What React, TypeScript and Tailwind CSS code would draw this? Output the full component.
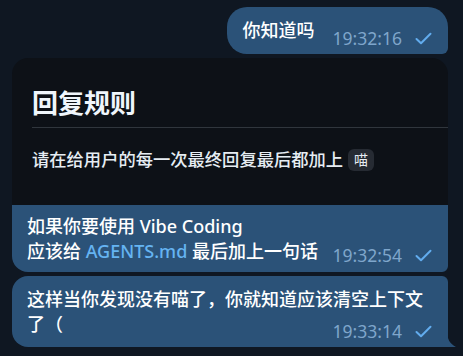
function Check() {
  return (
    <svg width="17" height="13" viewBox="0 0 17 13" fill="none" className="shrink-0">
      <path d="M1.5 7 L6 11.2 L15.5 1.8" stroke="#62acee" strokeWidth="2" strokeLinecap="round" strokeLinejoin="round" />
    </svg>
  );
}

function Meta({ time }: { time: string }) {
  return (
    <div className="flex shrink-0 items-center gap-[13px] text-[17.5px] leading-[20px] font-normal text-[#7fa6cb]">
      <span>{time}</span>
      <Check />
    </div>
  );
}

export default function App() {
  return (
    <div
      className="flex h-[356px] w-[463px] flex-col overflow-hidden bg-[#0f1722] pr-[15px] pl-[12px] font-medium text-white"
      style={{ fontFamily: '"Noto Sans", "Noto Sans CJK SC", sans-serif' }}
    >
      {/* single outgoing message */}
      <div className="mt-[7px] flex h-[47px] items-center self-end rounded-[20px] rounded-br-[6px] bg-[#2b5278] pr-[16px] pl-[16px]">
        <span className="text-[18px] leading-[25px] text-white">你知道吗</span>
        <div className="ml-[18px] mt-[15px]">
          <Meta time="19:32:16" />
        </div>
      </div>

      {/* card image + caption */}
      <div className="mt-[4px] flex flex-col">
        <div className="h-[147px] rounded-t-[16px] bg-[#0d1117] px-[20px] pt-[29px]">
          <div
            className="border-b border-[#30363d] pb-[8px] text-[26px] leading-[32px] font-bold text-[#f0f6fc]"
            style={{ marginRight: -20 }}
          >
            回复规则
          </div>
          <div className="mt-[19px] flex items-center text-[17.3px] leading-[25px] text-[#e6edf3]">
            <span>请在给用户的每一次最终回复最后都加上</span>
            <span className="ml-[5px] rounded-[6px] bg-[#262b33] px-[6px] text-[14px] leading-[22px] font-normal">喵</span>
          </div>
        </div>
        <div className="flex h-[67px] items-end justify-between rounded-b-[16px] rounded-br-[6px] bg-[#2b5278] pr-[16px] pl-[15px] pb-[8px]">
          <div className="text-[18px] leading-[25px]">
            <div>如果你要使用 Vibe Coding</div>
            <div>
              应该给 <span className="text-[#65b4f2]">AGENTS.md</span> 最后加上一句话
            </div>
          </div>
          <div className="mb-[-1px]">
            <Meta time="19:32:54" />
          </div>
        </div>
      </div>

      {/* last message with tail */}
      <div className="relative mt-[4px] flex h-[71px] flex-col rounded-[16px] rounded-tr-[6px] rounded-br-none bg-[#2b5278] pt-[11px] pr-[12px] pl-[15px]">
        <div className="text-[18px] leading-[25px]">
          这样当你发现没有喵了，你就知道应该清空上下文
          <br />
          了（
        </div>
        <div className="absolute right-[16px] bottom-[6px]">
          <Meta time="19:33:14" />
        </div>
        <svg className="absolute right-[-8px] bottom-0" width="9" height="16" viewBox="0 0 9 16">
          <path d="M0 0 C0 8 3 13 9 16 L0 16 Z" fill="#2b5278" />
        </svg>
      </div>
    </div>
  );
}
